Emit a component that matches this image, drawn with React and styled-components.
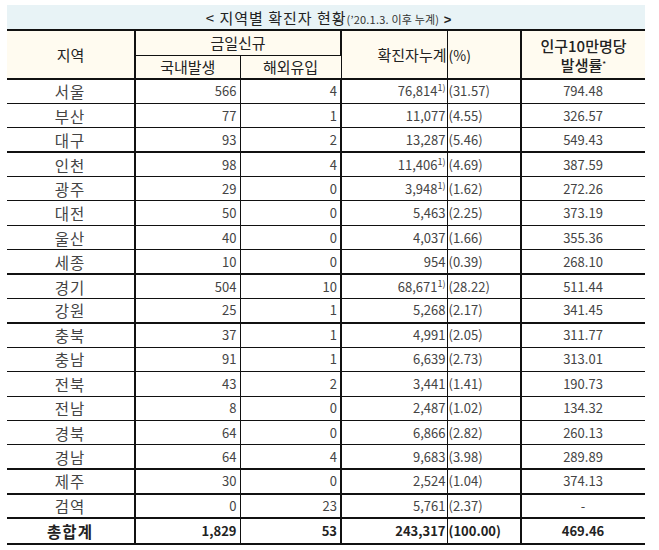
import styled, { createGlobalStyle } from "styled-components";

const GlobalStyle = createGlobalStyle`
  body {
    margin: 0;
    background: #fff;
    font-family: "Noto Sans CJK KR", "Noto Sans", sans-serif;
    color: #333;
  }
`;

const rows = [
  ["서울", "566", "4", "76,814", true, "31.57", "794.48"],
  ["부산", "77", "1", "11,077", false, "4.55", "326.57"],
  ["대구", "93", "2", "13,287", false, "5.46", "549.43"],
  ["인천", "98", "4", "11,406", true, "4.69", "387.59"],
  ["광주", "29", "0", "3,948", true, "1.62", "272.26"],
  ["대전", "50", "0", "5,463", false, "2.25", "373.19"],
  ["울산", "40", "0", "4,037", false, "1.66", "355.36"],
  ["세종", "10", "0", "954", false, "0.39", "268.10"],
  ["경기", "504", "10", "68,671", true, "28.22", "511.44"],
  ["강원", "25", "1", "5,268", false, "2.17", "341.45"],
  ["충북", "37", "1", "4,991", false, "2.05", "311.77"],
  ["충남", "91", "1", "6,639", false, "2.73", "313.01"],
  ["전북", "43", "2", "3,441", false, "1.41", "190.73"],
  ["전남", "8", "0", "2,487", false, "1.02", "134.32"],
  ["경북", "64", "0", "6,866", false, "2.82", "260.13"],
  ["경남", "64", "4", "9,683", false, "3.98", "289.89"],
  ["제주", "30", "0", "2,524", false, "1.04", "374.13"],
  ["검역", "0", "23", "5,761", false, "2.37", "-"],
];

// rows whose top line is drawn thicker in the reference
const thickTop = new Set(["인천", "경기", "충북", "제주", "검역"]);

export default function App() {
  return (
    <Page>
      <GlobalStyle />
      <Table>
        <colgroup>
          <col style={{ width: 128 }} />
          <col style={{ width: 105 }} />
          <col style={{ width: 101 }} />
          <col style={{ width: 106 }} />
          <col style={{ width: 74 }} />
          <col style={{ width: 124 }} />
        </colgroup>
        <thead>
          <tr>
            <TitleCell colSpan={6}>
              &lt; 지역별 확진자 현황
              <small>(’20.1.3. 이후 누계)</small> <strong>&gt;</strong>
            </TitleCell>
          </tr>
          <HeadRow $h={25}>
            <Th rowSpan={2}>지역</Th>
            <Th colSpan={2} $under>
              금일신규
            </Th>
            <Th rowSpan={2} $align="right" $split>
              확진자누계
            </Th>
            <Th rowSpan={2} $align="left" $latin>
              (%)
            </Th>
            <Th rowSpan={2} $tight>
              인구10만명당
              <br />
              발생률<Star>*</Star>
            </Th>
          </HeadRow>
          <HeadRow $h={24}>
            <Th $dotted>국내발생</Th>
            <Th>해외유입</Th>
          </HeadRow>
        </thead>
        <tbody>
          {rows.map(([region, dom, abroad, total, note, pct, rate]) => (
            <Row key={region} $thick={thickTop.has(region)}>
              <Td $region>{region}</Td>
              <Td $num $dotted>
                {dom}
              </Td>
              <Td $num>{abroad}</Td>
              <Td $num $split>
                {total}
                {note && <Note>1)</Note>}
              </Td>
              <Td $pct>({pct})</Td>
              <Td $rate>{rate}</Td>
            </Row>
          ))}
          <TotalRow>
            <Td $region $bold>
              총합계
            </Td>
            <Td $num $dotted $bold>
              1,829
            </Td>
            <Td $num $bold>
              53
            </Td>
            <Td $num $split $bold>
              243,317
            </Td>
            <Td $pct $bold>
              (100.00)
            </Td>
            <Td $rate $bold>
              469.46
            </Td>
          </TotalRow>
        </tbody>
      </Table>
    </Page>
  );
}

const Page = styled.div`
  padding: 5px 0 0 7px;
`;

const Table = styled.table`
  width: 638px;
  border-collapse: collapse;
  table-layout: fixed;

  th:nth-child(1),
  td:nth-child(1) {
    border-left: none;
  }
  th:last-child,
  td:last-child {
    border-right: none;
  }
`;

const TitleCell = styled.th`
  height: 24px;
  padding: 0 0 0 6px;
  background: #e8f3f6;
  border-bottom: 2px solid #111;
  font-size: 15px;
  font-weight: 400;
  color: #222;
  letter-spacing: 1px;

  strong {
    font-weight: 700;
    font-family: "Liberation Sans", sans-serif;
    font-size: 13px;
  }

  small {
    font-size: 11px;
    letter-spacing: 0.2px;
    color: #333;
  }
`;

const HeadRow = styled.tr`
  height: ${(p) => p.$h}px;
`;

const Th = styled.th`
  padding: 0 2px;
  background: #fffbf0;
  font-weight: ${(p) => (p.$tight ? 500 : 400)};
  font-size: ${(p) => (p.$latin ? "14px" : "15px")};
  line-height: ${(p) => (p.$tight ? "19px" : "20px")};
  color: #222;
  text-align: ${(p) => p.$align || "center"};
  border-left: 1px solid #111;
  border-right: ${(p) =>
    p.$dotted ? "1px dotted #111" : p.$split ? "1px solid #111" : "2px solid #111"};
  border-bottom: ${(p) => (p.$under ? "1px solid #111" : "2px solid #111")};
  ${(p) => p.$split && "padding-right: 0;"}
  ${(p) => p.$latin && "padding-left: 1px;"}
`;

const Star = styled.span`
  font-size: 8px;
  vertical-align: 4px;
  line-height: 0;
`;

const Row = styled.tr`
  height: 24.4px;

  td {
    border-top: ${(p) => (p.$thick ? "2px" : "1px")} solid #111;
  }
`;

const TotalRow = styled.tr`
  height: 26px;

  td {
    border-top: 2px solid #111;
    border-bottom: 2px solid #111;
  }
`;

const Td = styled.td`
  padding: 0 3px 0 2px;
  font-size: ${(p) => (p.$region ? "15.5px" : "13px")};
  font-weight: ${(p) => (p.$bold ? 700 : 400)};
  line-height: 18px;
  letter-spacing: ${(p) => (p.$region ? "1px" : "0")};
  color: ${(p) => (p.$bold ? "#222" : "#444")};
  text-align: ${(p) => (p.$num ? "right" : p.$pct ? "left" : "center")};
  white-space: nowrap;
  border-left: 1px solid #111;
  border-right: ${(p) =>
    p.$dotted ? "1px dotted #111" : p.$split ? "1px solid #111" : "2px solid #111"};
  ${(p) => p.$split && "padding-right: 1px;"}
  ${(p) => p.$pct && "padding-left: 1px;"}
`;

const Note = styled.sup`
  font-size: 9px;
  vertical-align: 5px;
  line-height: 0;
`;
